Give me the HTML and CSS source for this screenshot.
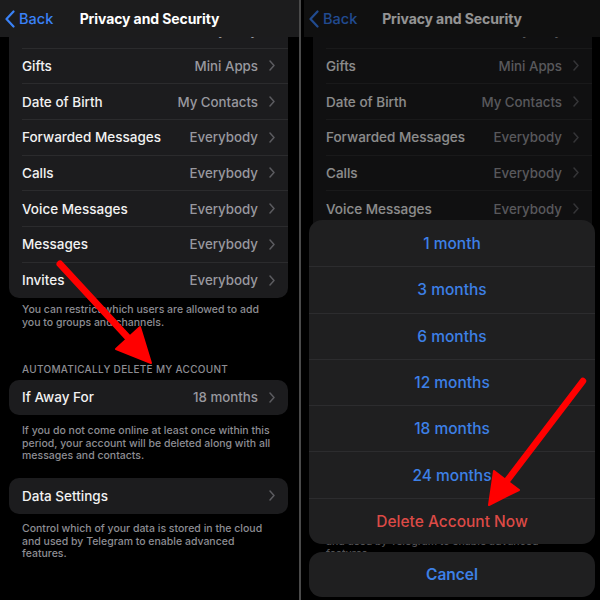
FILE: index.html
```html
<!DOCTYPE html>
<html lang="en">
<head>
<meta charset="utf-8">
<title>Privacy and Security</title>
<link rel="stylesheet" href="styles.css">
</head>
<body>
<div class="screen">
  <section class="panel panel-left">
    <header class="nav">
      <div class="back">
        <svg class="back-chevron" width="10" height="18" viewBox="0 0 10 18"><polyline points="8.5,1.5 1.5,9 8.5,16.5" fill="none" stroke="currentColor" stroke-width="2.2" stroke-linecap="round" stroke-linejoin="round"/></svg>
        <span>Back</span>
      </div>
      <div class="title">Privacy and Security</div>
      <div></div>
    </header>
    <main class="content">
      <div class="card card-top">
        <div class="row"><div class="row-inner"><span class="label">Bio</span><span class="value">Everybody</span><svg class="chev" width="6" height="11" viewBox="0 0 6 11"><polyline points="1,1 5,5.5 1,10" fill="none" stroke="currentColor" stroke-width="1.5" stroke-linecap="round" stroke-linejoin="round"/></svg></div></div>
        <div class="row"><div class="row-inner"><span class="label">Gifts</span><span class="value">Mini Apps</span><svg class="chev" width="6" height="11" viewBox="0 0 6 11"><polyline points="1,1 5,5.5 1,10" fill="none" stroke="currentColor" stroke-width="1.5" stroke-linecap="round" stroke-linejoin="round"/></svg></div></div>
        <div class="row"><div class="row-inner"><span class="label">Date of Birth</span><span class="value">My Contacts</span><svg class="chev" width="6" height="11" viewBox="0 0 6 11"><polyline points="1,1 5,5.5 1,10" fill="none" stroke="currentColor" stroke-width="1.5" stroke-linecap="round" stroke-linejoin="round"/></svg></div></div>
        <div class="row"><div class="row-inner"><span class="label">Forwarded Messages</span><span class="value">Everybody</span><svg class="chev" width="6" height="11" viewBox="0 0 6 11"><polyline points="1,1 5,5.5 1,10" fill="none" stroke="currentColor" stroke-width="1.5" stroke-linecap="round" stroke-linejoin="round"/></svg></div></div>
        <div class="row"><div class="row-inner"><span class="label">Calls</span><span class="value">Everybody</span><svg class="chev" width="6" height="11" viewBox="0 0 6 11"><polyline points="1,1 5,5.5 1,10" fill="none" stroke="currentColor" stroke-width="1.5" stroke-linecap="round" stroke-linejoin="round"/></svg></div></div>
        <div class="row"><div class="row-inner"><span class="label">Voice Messages</span><span class="value">Everybody</span><svg class="chev" width="6" height="11" viewBox="0 0 6 11"><polyline points="1,1 5,5.5 1,10" fill="none" stroke="currentColor" stroke-width="1.5" stroke-linecap="round" stroke-linejoin="round"/></svg></div></div>
        <div class="row"><div class="row-inner"><span class="label">Messages</span><span class="value">Everybody</span><svg class="chev" width="6" height="11" viewBox="0 0 6 11"><polyline points="1,1 5,5.5 1,10" fill="none" stroke="currentColor" stroke-width="1.5" stroke-linecap="round" stroke-linejoin="round"/></svg></div></div>
        <div class="row"><div class="row-inner"><span class="label">Invites</span><span class="value">Everybody</span><svg class="chev" width="6" height="11" viewBox="0 0 6 11"><polyline points="1,1 5,5.5 1,10" fill="none" stroke="currentColor" stroke-width="1.5" stroke-linecap="round" stroke-linejoin="round"/></svg></div></div>
      </div>
      <p class="note">You can restrict which users are allowed to add you to groups and channels.</p>
      <h2 class="section-title">AUTOMATICALLY DELETE MY ACCOUNT</h2>
      <div class="card">
        <div class="row"><div class="row-inner"><span class="label">If Away For</span><span class="value">18 months</span><svg class="chev" width="6" height="11" viewBox="0 0 6 11"><polyline points="1,1 5,5.5 1,10" fill="none" stroke="currentColor" stroke-width="1.5" stroke-linecap="round" stroke-linejoin="round"/></svg></div></div>
      </div>
      <p class="note note-loose">If you do not come online at least once within this period, your account will be deleted along with all messages and contacts.</p>
      <div class="card card-gap">
        <div class="row"><div class="row-inner"><span class="label">Data Settings</span><svg class="chev" width="6" height="11" viewBox="0 0 6 11"><polyline points="1,1 5,5.5 1,10" fill="none" stroke="currentColor" stroke-width="1.5" stroke-linecap="round" stroke-linejoin="round"/></svg></div></div>
      </div>
      <p class="note note-loose">Control which of your data is stored in the cloud and used by Telegram to enable advanced features.</p>
    </main>
  </section>

  <div class="divider"></div>

  <section class="panel panel-right">
    <header class="nav">
      <div class="back">
        <svg class="back-chevron" width="10" height="18" viewBox="0 0 10 18"><polyline points="8.5,1.5 1.5,9 8.5,16.5" fill="none" stroke="currentColor" stroke-width="2.2" stroke-linecap="round" stroke-linejoin="round"/></svg>
        <span>Back</span>
      </div>
      <div class="title">Privacy and Security</div>
      <div></div>
    </header>
    <main class="content">
      <div class="card card-top">
        <div class="row"><div class="row-inner"><span class="label">Bio</span><span class="value">Everybody</span><svg class="chev" width="6" height="11" viewBox="0 0 6 11"><polyline points="1,1 5,5.5 1,10" fill="none" stroke="currentColor" stroke-width="1.5" stroke-linecap="round" stroke-linejoin="round"/></svg></div></div>
        <div class="row"><div class="row-inner"><span class="label">Gifts</span><span class="value">Mini Apps</span><svg class="chev" width="6" height="11" viewBox="0 0 6 11"><polyline points="1,1 5,5.5 1,10" fill="none" stroke="currentColor" stroke-width="1.5" stroke-linecap="round" stroke-linejoin="round"/></svg></div></div>
        <div class="row"><div class="row-inner"><span class="label">Date of Birth</span><span class="value">My Contacts</span><svg class="chev" width="6" height="11" viewBox="0 0 6 11"><polyline points="1,1 5,5.5 1,10" fill="none" stroke="currentColor" stroke-width="1.5" stroke-linecap="round" stroke-linejoin="round"/></svg></div></div>
        <div class="row"><div class="row-inner"><span class="label">Forwarded Messages</span><span class="value">Everybody</span><svg class="chev" width="6" height="11" viewBox="0 0 6 11"><polyline points="1,1 5,5.5 1,10" fill="none" stroke="currentColor" stroke-width="1.5" stroke-linecap="round" stroke-linejoin="round"/></svg></div></div>
        <div class="row"><div class="row-inner"><span class="label">Calls</span><span class="value">Everybody</span><svg class="chev" width="6" height="11" viewBox="0 0 6 11"><polyline points="1,1 5,5.5 1,10" fill="none" stroke="currentColor" stroke-width="1.5" stroke-linecap="round" stroke-linejoin="round"/></svg></div></div>
        <div class="row"><div class="row-inner"><span class="label">Voice Messages</span><span class="value">Everybody</span><svg class="chev" width="6" height="11" viewBox="0 0 6 11"><polyline points="1,1 5,5.5 1,10" fill="none" stroke="currentColor" stroke-width="1.5" stroke-linecap="round" stroke-linejoin="round"/></svg></div></div>
        <div class="row"><div class="row-inner"><span class="label">Messages</span><span class="value">Everybody</span><svg class="chev" width="6" height="11" viewBox="0 0 6 11"><polyline points="1,1 5,5.5 1,10" fill="none" stroke="currentColor" stroke-width="1.5" stroke-linecap="round" stroke-linejoin="round"/></svg></div></div>
        <div class="row"><div class="row-inner"><span class="label">Invites</span><span class="value">Everybody</span><svg class="chev" width="6" height="11" viewBox="0 0 6 11"><polyline points="1,1 5,5.5 1,10" fill="none" stroke="currentColor" stroke-width="1.5" stroke-linecap="round" stroke-linejoin="round"/></svg></div></div>
      </div>
      <p class="note">You can restrict which users are allowed to add you to groups and channels.</p>
      <h2 class="section-title">AUTOMATICALLY DELETE MY ACCOUNT</h2>
      <div class="card">
        <div class="row"><div class="row-inner"><span class="label">If Away For</span><span class="value">18 months</span><svg class="chev" width="6" height="11" viewBox="0 0 6 11"><polyline points="1,1 5,5.5 1,10" fill="none" stroke="currentColor" stroke-width="1.5" stroke-linecap="round" stroke-linejoin="round"/></svg></div></div>
      </div>
      <p class="note note-loose">If you do not come online at least once within this period, your account will be deleted along with all messages and contacts.</p>
      <div class="card card-gap">
        <div class="row"><div class="row-inner"><span class="label">Data Settings</span><svg class="chev" width="6" height="11" viewBox="0 0 6 11"><polyline points="1,1 5,5.5 1,10" fill="none" stroke="currentColor" stroke-width="1.5" stroke-linecap="round" stroke-linejoin="round"/></svg></div></div>
      </div>
      <p class="note note-loose">Control which of your data is stored in the cloud and used by Telegram to enable advanced features.</p>
    </main>
    <div class="dim"></div>
    <div class="sheet">
      <div class="sheet-item">1 month</div>
      <div class="sheet-item">3 months</div>
      <div class="sheet-item">6 months</div>
      <div class="sheet-item">12 months</div>
      <div class="sheet-item">18 months</div>
      <div class="sheet-item">24 months</div>
      <div class="sheet-item sheet-delete">Delete Account Now</div>
    </div>
    <div class="cancel">Cancel</div>
  </section>

  <svg class="arrows" width="600" height="600" viewBox="0 0 600 600">
    <line x1="60" y1="264" x2="132" y2="342" stroke="#ff0000" stroke-width="7" stroke-linecap="round"/>
    <polygon points="151,363 116,349 140,327" fill="#ff0000" stroke="#ff0000" stroke-width="2" stroke-linejoin="round"/>
    <line x1="583" y1="381" x2="506" y2="482" stroke="#ff0000" stroke-width="6.5" stroke-linecap="round"/>
    <polygon points="489,505 494,471 519,490" fill="#ff0000" stroke="#ff0000" stroke-width="2" stroke-linejoin="round"/>
  </svg>
</div>
</body>
</html>
```

FILE: styles.css
```css
* { box-sizing: border-box; }

html, body {
  margin: 0;
  padding: 0;
  background: #000;
}

body {
  font-family: Inter, "Noto Sans", "Liberation Sans", sans-serif;
  -webkit-font-smoothing: antialiased;
}

.screen {
  display: flex;
  width: 600px;
  height: 600px;
  overflow: hidden;
  position: relative;
  background: #000;
}

.panel {
  width: 299px;
  flex: none;
  height: 600px;
  display: flex;
  flex-direction: column;
  position: relative;
  overflow: hidden;
  background: #000;
}

.panel-right {
  width: 299px;
  padding-left: 3px;
}

.divider {
  width: 2px;
  flex: none;
  background: #4a4a4a;
}

.nav {
  height: 37px;
  flex: none;
  background: #1c1c1d;
  display: grid;
  grid-template-columns: 1fr auto 1fr;
  align-items: center;
  position: relative;
  z-index: 1;
}

.back {
  display: flex;
  align-items: center;
  gap: 4px;
  padding-left: 5px;
  color: #3a82f7;
  font-size: 14.5px;
  font-weight: 500;
}

.back-chevron {
  display: block;
}

.title {
  color: #fff;
  font-size: 14px;
  font-weight: 700;
  letter-spacing: -0.1px;
}

.content {
  flex: 1;
  overflow: hidden;
  padding: 0 11px 0 9px;
}

.panel-right .content {
  padding: 0 8px 0 9px;
}

.card {
  background: #1c1c1e;
  border-radius: 10px;
}

.card-top {
  margin-top: -24px;
}

.card-gap {
  margin-top: 15px;
}

.row {
  height: 35.67px;
  padding-left: 13px;
  display: flex;
}

.row-inner {
  flex: 1;
  display: flex;
  align-items: center;
  padding-right: 13px;
  border-bottom: 1px solid #2b2b2d;
}

.row:last-child .row-inner {
  border-bottom: none;
}

.label {
  flex: 1;
  color: #f2f2f2;
  font-size: 13.5px;
  font-weight: 500;
  white-space: nowrap;
}

.value {
  color: #98989e;
  font-size: 13.3px;
  font-weight: 500;
  margin-right: 11px;
  white-space: nowrap;
}

.chev {
  color: #5c5c60;
  display: block;
  flex: none;
}

.note {
  margin: 0;
  padding: 6px 13px 0 13px;
  color: #8d8d93;
  font-size: 10.5px;
  line-height: 12.7px;
  font-weight: 500;
}

.note-loose {
  padding-top: 9.5px;
}

.section-title {
  margin: 33.5px 0 3.5px 0;
  padding: 0 13px;
  color: #8d8d93;
  font-size: 10px;
  line-height: 13px;
  font-weight: 500;
  letter-spacing: 0.3px;
}

.dim {
  position: absolute;
  inset: 0;
  background: rgba(0, 0, 0, 0.42);
  z-index: 2;
}

.sheet {
  position: absolute;
  left: 8px;
  top: 220px;
  width: 286px;
  border-radius: 13px;
  background: #1f1f20;
  overflow: hidden;
  z-index: 3;
}

.sheet-item {
  height: 46.3px;
  display: flex;
  align-items: center;
  justify-content: center;
  color: #3d80e6;
  font-size: 15.5px;
  font-weight: 500;
  border-top: 1px solid #2c2c2e;
}

.sheet-item:first-child {
  border-top: none;
}

.sheet-delete {
  color: #dc4a46;
}

.cancel {
  position: absolute;
  left: 8px;
  top: 552px;
  width: 286px;
  height: 45px;
  border-radius: 13px;
  background: #1f1f20;
  display: flex;
  align-items: center;
  justify-content: center;
  color: #3d80e6;
  font-size: 15.5px;
  font-weight: 600;
  z-index: 3;
}

.arrows {
  position: absolute;
  left: 0;
  top: 0;
  z-index: 10;
  pointer-events: none;
}
```
